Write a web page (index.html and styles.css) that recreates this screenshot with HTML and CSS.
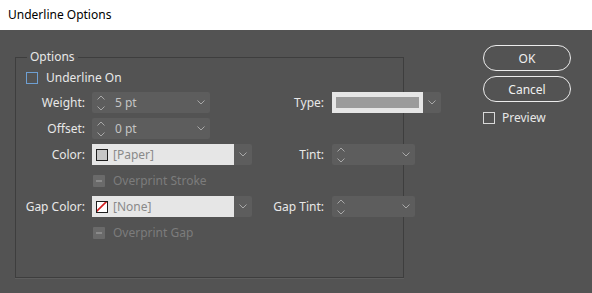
FILE: index.html
```html
<!DOCTYPE html>
<html>
<head>
<meta charset="utf-8">
<link rel="stylesheet" href="styles.css">
</head>
<body>
<div class="titlebar">Underline Options</div>
<div class="dialog">
  <fieldset class="group">
    <legend class="legend">Options</legend>
    <label class="check-row">
      <span class="cb cb-blue"></span>
      <span>Underline On</span>
    </label>
    <div class="grid">
      <span class="lbl">Weight:</span>
      <div class="spin w118">
        <svg class="spin-ic" width="8" height="16" viewBox="0 0 8 16"><path d="M0.5 4.5 L4 1 L7.5 4.5 M0.5 11.5 L4 15 L7.5 11.5" stroke="#a8a8a8" fill="none"/></svg>
        <span class="val">5 pt</span>
        <svg class="chev" width="8" height="5" viewBox="0 0 8 5"><path d="M0.5 0.5 L4 4 L7.5 0.5" stroke="#a8a8a8" fill="none"/></svg>
      </div>
      <span class="lbl">Type:</span>
      <div class="combo w108">
        <div class="white"><span class="stroke-bar"></span></div>
        <div class="drop"><svg width="8" height="5" viewBox="0 0 8 5"><path d="M0.5 0.5 L4 4 L7.5 0.5" stroke="#a8a8a8" fill="none"/></svg></div>
      </div>

      <span class="lbl">Offset:</span>
      <div class="spin w118">
        <svg class="spin-ic" width="8" height="16" viewBox="0 0 8 16"><path d="M0.5 4.5 L4 1 L7.5 4.5 M0.5 11.5 L4 15 L7.5 11.5" stroke="#a8a8a8" fill="none"/></svg>
        <span class="val">0 pt</span>
        <svg class="chev" width="8" height="5" viewBox="0 0 8 5"><path d="M0.5 0.5 L4 4 L7.5 0.5" stroke="#a8a8a8" fill="none"/></svg>
      </div>
      <span></span><span></span>

      <span class="lbl">Color:</span>
      <div class="combo w160">
        <div class="white"><span class="swatch paper"></span><span class="ctext">[Paper]</span></div>
        <div class="drop"><svg width="8" height="5" viewBox="0 0 8 5"><path d="M0.5 0.5 L4 4 L7.5 0.5" stroke="#a8a8a8" fill="none"/></svg></div>
      </div>
      <span class="lbl">Tint:</span>
      <div class="spin w83">
        <svg class="spin-ic" width="8" height="16" viewBox="0 0 8 16"><path d="M0.5 4.5 L4 1 L7.5 4.5 M0.5 11.5 L4 15 L7.5 11.5" stroke="#a8a8a8" fill="none"/></svg>
        <span class="val"></span>
        <svg class="chev" width="8" height="5" viewBox="0 0 8 5"><path d="M0.5 0.5 L4 4 L7.5 0.5" stroke="#a8a8a8" fill="none"/></svg>
      </div>

      <span></span>
      <div class="dis-row"><span class="cb cb-dis"><span class="dash"></span></span><span>Overprint Stroke</span></div>
      <span></span><span></span>

      <span class="lbl">Gap Color:</span>
      <div class="combo w160">
        <div class="white"><span class="swatch none"><svg width="11" height="11" viewBox="0 0 11 11"><path d="M0 11 L11 0" stroke="#d42020" stroke-width="1.6"/></svg></span><span class="ctext">[None]</span></div>
        <div class="drop"><svg width="8" height="5" viewBox="0 0 8 5"><path d="M0.5 0.5 L4 4 L7.5 0.5" stroke="#a8a8a8" fill="none"/></svg></div>
      </div>
      <span class="lbl">Gap Tint:</span>
      <div class="spin w83">
        <svg class="spin-ic" width="8" height="16" viewBox="0 0 8 16"><path d="M0.5 4.5 L4 1 L7.5 4.5 M0.5 11.5 L4 15 L7.5 11.5" stroke="#a8a8a8" fill="none"/></svg>
        <span class="val"></span>
        <svg class="chev" width="8" height="5" viewBox="0 0 8 5"><path d="M0.5 0.5 L4 4 L7.5 0.5" stroke="#a8a8a8" fill="none"/></svg>
      </div>

      <span></span>
      <div class="dis-row"><span class="cb cb-dis"><span class="dash"></span></span><span>Overprint Gap</span></div>
      <span></span><span></span>
    </div>
  </fieldset>
  <div class="buttons">
    <button class="btn">OK</button>
    <button class="btn">Cancel</button>
    <label class="preview"><span class="cb cb-white"></span><span>Preview</span></label>
  </div>
</div>
</body>
</html>
```
FILE: styles.css
```css
* { box-sizing: border-box; }
html, body { margin: 0; padding: 0; }
body {
  width: 592px;
  height: 293px;
  background: #535353;
  font-family: "Noto Sans", "Open Sans", sans-serif;
  font-size: 12px;
  color: #e8e8e8;
  overflow: hidden;
}
.titlebar {
  height: 30px;
  background: #ffffff;
  color: #000000;
  line-height: 30px;
  padding-left: 8px;
  font-size: 12px;
}
.dialog {
  display: flex;
  height: 263px;
  padding: 15px 0 15px 15px;
  gap: 79px;
}
.group {
  margin: 4px 0 0 0;
  width: 389px;
  border: 1px solid #3e3e3e;
  box-shadow: 0 1px 0 #5e5e5e;
  padding: 4px 0 0 0;
  min-inline-size: 0;
}
.legend {
  margin-left: 11px;
  padding: 0 3px;
  line-height: 16px;
  color: #e8e8e8;
}
.check-row {
  display: flex;
  align-items: center;
  height: 17px;
  padding-left: 10px;
  gap: 8px;
}
.cb {
  display: inline-block;
  width: 12px;
  height: 12px;
  flex: none;
}
.cb-blue { border: 1.5px solid #6e9fd2; }
.cb-white { border: 1px solid #d8d8d8; }
.cb-dis {
  background: #6a6a6a;
  border-radius: 1px;
  display: flex;
  align-items: center;
  justify-content: center;
}
.dash { width: 6px; height: 2px; background: #8a8a8a; }
.grid {
  margin-top: 6px;
  display: grid;
  grid-template-columns: 76px 160px 80px 110px;
  grid-auto-rows: 21px;
  row-gap: 5px;
  align-items: center;
}
.lbl {
  text-align: right;
  padding-right: 7px;
  white-space: nowrap;
}
.grid .lbl:nth-child(4n+3) { padding-right: 8px; }
.spin {
  height: 21px;
  background: #5d5d5d;
  border-radius: 2px;
  display: flex;
  align-items: center;
  padding-left: 5px;
  padding-right: 5px;
}
.spin-ic { flex: none; }
.val { flex: 1; padding-left: 10px; color: #c4c4c4; }
.chev { flex: none; }
.w118 { width: 118px; }
.w83 { width: 83px; }
.w108 { width: 109px; }
.w160 { width: 160px; }
.combo {
  height: 21px;
  display: flex;
}
.white {
  flex: 1;
  background: #e6e6e6;
  display: flex;
  align-items: center;
  padding-left: 4px;
  gap: 5px;
}
.drop {
  width: 18px;
  background: #5d5d5d;
  display: flex;
  align-items: center;
  justify-content: center;
  border-radius: 0 2px 2px 0;
}
.stroke-bar {
  display: block;
  width: 83px;
  height: 11px;
  background: #9b9b9b;
}
.swatch {
  width: 12px;
  height: 12px;
  border: 1px solid #1e1e1e;
  flex: none;
  display: flex;
  overflow: hidden;
}
.swatch svg { display: block; margin: -1px; }
.paper { background: #c6c6c6; }
.none { background: #ffffff; }
.ctext { color: #8a8a8a; }
.dis-row {
  display: flex;
  align-items: center;
  gap: 8px;
  padding-left: 1px;
  color: #7c7c7c;
  white-space: nowrap;
}
.buttons {
  display: flex;
  flex-direction: column;
  width: 88px;
}
.btn {
  height: 26px;
  width: 88px;
  border: 1.5px solid #ececec;
  border-radius: 13px;
  background: transparent;
  color: #f0f0f0;
  font-family: inherit;
  font-size: 12px;
  padding: 0;
  margin: 0 0 5px 0;
}
.preview {
  display: flex;
  align-items: center;
  gap: 7px;
  margin-top: 2px;
  height: 17px;
}
```
